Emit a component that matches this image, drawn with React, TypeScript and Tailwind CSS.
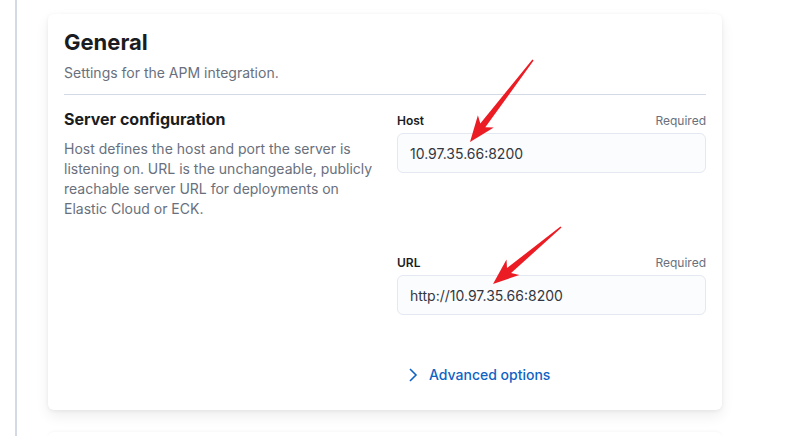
import React from "react";

function arrowPoints(tx: number, ty: number, hx: number, hy: number, headLen = 26, headHalf = 10, shaftHalf = 3.2) {
  const dx = hx - tx;
  const dy = hy - ty;
  const len = Math.hypot(dx, dy);
  const ux = dx / len;
  const uy = dy / len;
  const nx = -uy;
  const ny = ux;
  const bx = hx - ux * headLen;
  const by = hy - uy * headLen;
  const jx = hx - ux * (headLen - 5);
  const jy = hy - uy * (headLen - 5);
  const pts: [number, number][] = [
    [tx + nx * 0.8, ty + ny * 0.8],
    [jx + nx * shaftHalf, jy + ny * shaftHalf],
    [bx + nx * headHalf, by + ny * headHalf],
    [hx, hy],
    [bx - nx * headHalf, by - ny * headHalf],
    [jx - nx * shaftHalf, jy - ny * shaftHalf],
    [tx - nx * 0.8, ty - ny * 0.8],
  ];
  return pts.map((p) => `${p[0].toFixed(1)},${p[1].toFixed(1)}`).join(" ");
}

function Field({ label, value, className }: { label: string; value: string; className?: string }) {
  return (
    <div className={className}>
      <div className="flex items-center justify-between h-4 text-[12px] leading-4">
        <span className="font-semibold text-[#1a1c21]">{label}</span>
        <span className="text-[#69707d]">Required</span>
      </div>
      <div className="mt-1 h-10 rounded-[6px] border border-[#e4e8f0] bg-[#fbfcfd] px-3 flex items-center text-[14px] text-[#343741]">
        {value}
      </div>
    </div>
  );
}

export default function App() {
  return (
    <div
      className="relative w-[812px] h-[436px] overflow-hidden bg-white"
      style={{ fontFamily: "Inter, 'Noto Sans', sans-serif" }}
    >
      <div className="flex h-full pl-[15px]">
        <div className="w-[2px] bg-[#d3dae6] self-stretch shrink-0" />
        <div className="ml-[31px] pt-[14px] flex flex-col">
          <div className="shrink-0 w-[674px] h-[396px] rounded-[6px] bg-white shadow-[0_6px_14px_rgba(0,0,0,0.07),0_1px_4px_rgba(0,0,0,0.06)] px-4 pt-3">
            <h2 className="text-[22px] leading-8 font-bold text-[#1a1c21]">General</h2>
            <p className="mt-[5px] text-[14px] leading-5 text-[#69707d]">Settings for the APM integration.</p>
            <div className="mt-[11px] h-px bg-[#d3dae6]" />
            <div className="mt-3 flex justify-between">
              <div className="w-[320px]">
                <h3 className="text-[16px] leading-6 font-bold text-[#1a1c21]">Server configuration</h3>
                <p className="mt-2 text-[14px] leading-5 text-[#69707d]">
                  Host defines the host and port the server is listening on. URL is the unchangeable, publicly
                  reachable server URL for deployments on Elastic Cloud or ECK.
                </p>
              </div>
              <div className="w-[309px] pt-[6px]">
                <Field label="Host" value="10.97.35.66:8200" />
                <Field label="URL" value="http://10.97.35.66:8200" className="mt-[82px]" />
                <div className="mt-[50px] flex items-center h-5 pl-[8px] text-[14px] leading-5 text-[#0e63c4] font-medium">
                  <svg width="16" height="16" viewBox="0 0 16 16" className="mr-[8px] shrink-0">
                    <path d="M5 2 L11 8 L5 14" fill="none" stroke="currentColor" strokeWidth="1.6" />
                  </svg>
                  <span>Advanced options</span>
                </div>
              </div>
            </div>
          </div>
          <div className="shrink-0 mt-[22px] w-[674px] h-[30px] rounded-[6px] bg-white shadow-[0_-1px_3px_rgba(0,0,0,0.035)]" />
        </div>
      </div>
      <svg className="absolute left-0 top-0 pointer-events-none" width="812" height="436">
        <polygon points={arrowPoints(533, 60, 470, 142)} fill="#ec1c24" />
        <polygon points={arrowPoints(561, 227, 493, 284)} fill="#ec1c24" />
      </svg>
    </div>
  );
}
